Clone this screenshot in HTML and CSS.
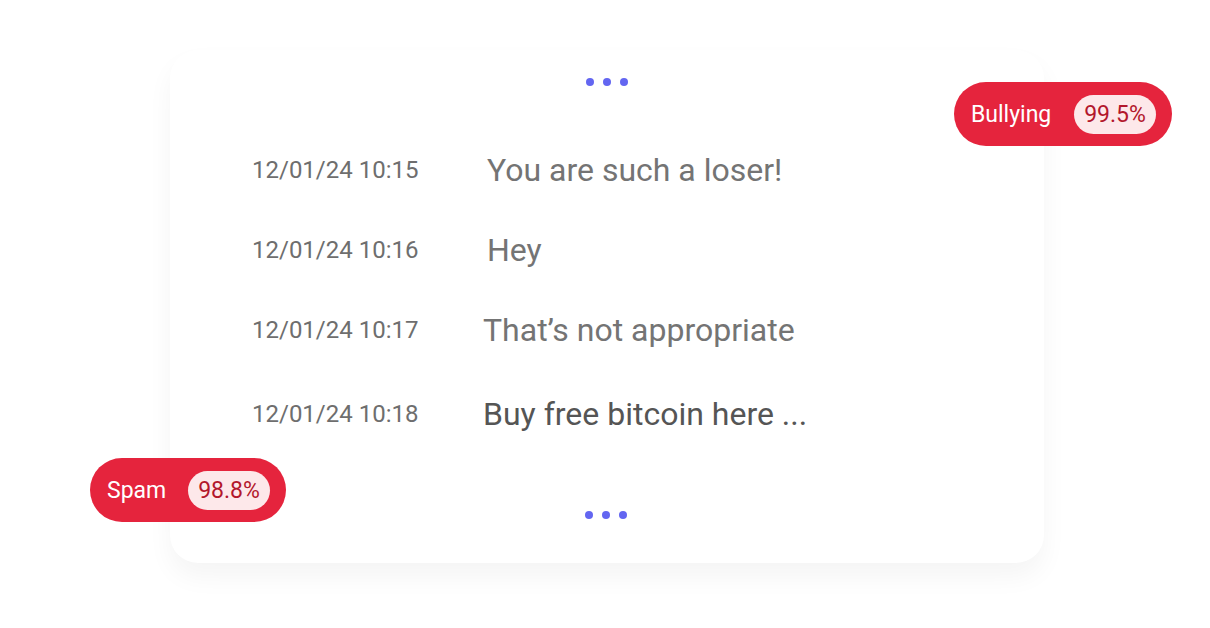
FILE: index.html
```html
<!DOCTYPE html>
<html lang="en">
<head>
  <meta charset="UTF-8">
  <title>Message moderation</title>
  <link rel="stylesheet" href="styles.css">
</head>
<body>
  <div class="stage">
    <div class="card">
      <div class="dots"><span></span><span></span><span></span></div>
      <div class="messages">
        <div class="row">
          <span class="time">12/01/24 10:15</span>
          <span class="text">You are such a loser!</span>
        </div>
        <div class="row">
          <span class="time">12/01/24 10:16</span>
          <span class="text">Hey</span>
        </div>
        <div class="row">
          <span class="time">12/01/24 10:17</span>
          <span class="text shift">That’s not appropriate</span>
        </div>
        <div class="row last">
          <span class="time">12/01/24 10:18</span>
          <span class="text shift dark">Buy free bitcoin here ...</span>
        </div>
      </div>
      <div class="dots bottom"><span></span><span></span><span></span></div>
    </div>

    <div class="tag tag-bullying">
      <span class="tag-label">Bullying</span>
      <span class="tag-score">99.5%</span>
    </div>
    <div class="tag tag-spam">
      <span class="tag-label">Spam</span>
      <span class="tag-score">98.8%</span>
    </div>
  </div>
</body>
</html>
```

FILE: styles.css
```css
body {
  margin: 0;
  background: #fff;
  font-family: Roboto, "Liberation Sans", sans-serif;
}
.stage {
  position: relative;
  width: 1210px;
  height: 628px;
  overflow: hidden;
}
.card {
  margin: 50px 0 0 170px;
  width: 874px;
  height: 513px;
  box-sizing: border-box;
  background: #fff;
  border-radius: 28px;
  box-shadow: 0 14px 26px rgba(0, 0, 0, 0.045);
  display: flex;
  flex-direction: column;
  padding-top: 28px;
}
.dots {
  display: flex;
  justify-content: center;
  gap: 9px;
}
.dots span {
  width: 8px;
  height: 8px;
  border-radius: 50%;
  background: #6366f1;
}
.dots.bottom {
  margin: 57px 0 0 -2px;
}
.messages {
  display: flex;
  flex-direction: column;
  padding: 44px 0 0 82px;
}
.row {
  display: flex;
  align-items: center;
  height: 80px;
}
.row.last {
  margin-top: 4px;
}
.time {
  width: 235px;
  font-size: 24px;
  color: #6e6e6e;
}
.text {
  font-size: 32px;
  color: #747474;
}
.text.shift {
  margin-left: -4px;
}
.text.dark {
  color: #555;
}
.tag {
  position: absolute;
  display: flex;
  align-items: center;
  height: 64px;
  box-sizing: border-box;
  padding: 0 16px 0 17px;
  border-radius: 32px;
  background: #e5243d;
}
.tag-bullying {
  left: 954px;
  top: 82px;
  width: 218px;
}
.tag-spam {
  left: 90px;
  top: 458px;
  width: 196px;
}
.tag-label {
  flex: 1;
  color: #fff;
  font-size: 23px;
}
.tag-score {
  width: 82px;
  height: 39px;
  line-height: 39px;
  text-align: center;
  border-radius: 20px;
  background: #fde8ea;
  color: #b3172c;
  font-size: 23px;
}
```
